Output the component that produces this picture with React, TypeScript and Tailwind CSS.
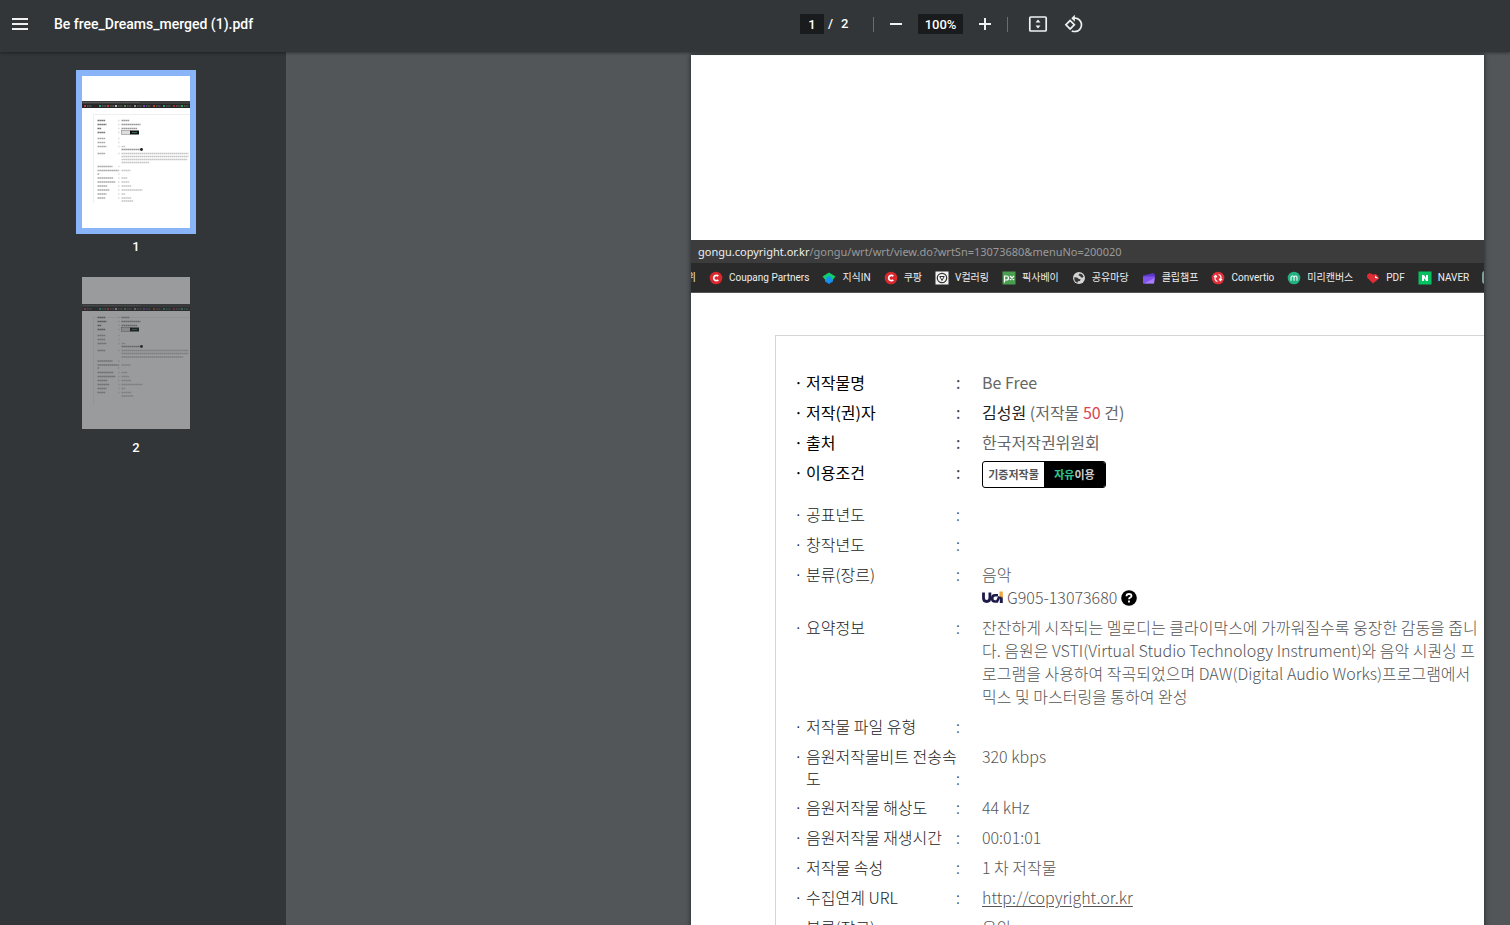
import React, { useState } from 'react';

type ThumbRow = { y: number; label?: number; value?: number; strong?: boolean };

const firstPageRows: ThumbRow[] = [
  { y: 44.5, label: 8, value: 8, strong: true },
  { y: 48.5, label: 9, value: 19, strong: true },
  { y: 52.5, label: 4, value: 16, strong: true },
  { y: 56.5, label: 8, strong: true },
  { y: 62.5, label: 8 },
  { y: 66.5, label: 8 },
  { y: 70.5, label: 9, value: 4 },
  { y: 73.5, value: 20, strong: true },
  { y: 77.5, label: 8, value: 67 },
  { y: 80.5, value: 67 },
  { y: 83.5, value: 66 },
  { y: 86.5, value: 28 },
  { y: 90.5, label: 15 },
  { y: 94.5, label: 21, value: 9 },
  { y: 98, label: 2 },
  { y: 102, label: 16, value: 6 },
  { y: 106, label: 18, value: 8 },
  { y: 110, label: 10, value: 10 },
  { y: 114, label: 12, value: 21 },
  { y: 118, label: 9, value: 4 },
  { y: 122, label: 8, value: 10 },
  { y: 125, value: 12 },
];

const secondPageRows: ThumbRow[] = [
  { y: 40.5, label: 8, value: 8, strong: true },
  { y: 44.5, label: 9, value: 19, strong: true },
  { y: 48.5, label: 4, value: 16, strong: true },
  { y: 52.5, label: 8, strong: true },
  { y: 58.5, label: 8 },
  { y: 62.5, label: 8 },
  { y: 66.5, label: 9, value: 4 },
  { y: 69.5, value: 20, strong: true },
  { y: 73.5, label: 8, value: 67 },
  { y: 76.5, value: 67 },
  { y: 80, value: 62 },
  { y: 84, label: 15 },
  { y: 88, label: 21, value: 9 },
  { y: 91, label: 2 },
  { y: 95.5, label: 16, value: 6 },
  { y: 99.5, label: 18, value: 8 },
  { y: 103.5, label: 10, value: 10 },
  { y: 107.5, label: 12, value: 21 },
  { y: 111.5, label: 9, value: 4 },
  { y: 115.5, label: 8, value: 10 },
  { y: 119, value: 12 },
];

const stripDots = [
  ['#e0453a', 3], ['#1fb8a0', 18], ['#e0453a', 26], ['#dddddd', 34], ['#5aa552', 43],
  ['#aaaaaa', 53], ['#7b4fe0', 62], ['#e0453a', 72], ['#2bb783', 82], ['#c03040', 92], ['#19c463', 100],
] as const;

const PageThumb = ({ rows, stripY, badgeY }: { rows: ThumbRow[]; stripY: number; badgeY: number }) => (
  <svg viewBox="0 0 108 152" className="block h-[152px] w-[108px]" aria-hidden="true">
    <rect width="108" height="152" fill="#fff" />
    <rect y={stripY} width="108" height="3" fill="#3c3c3c" />
    <rect y={stripY + 3} width="108" height="4" fill="#262626" />
    <path d={`M1 ${stripY + 1.5}H58`} stroke="#666" strokeWidth="0.8" strokeDasharray="1.6 0.5" />
    {stripDots.map(([color, x]) => (
      <g key={x}>
        <rect x={x - 1} y={stripY + 4} width="2" height="2" fill={color} opacity="0.8" />
        <path d={`M${x + 2} ${stripY + 5}h4.5`} stroke="#777" strokeWidth="1" strokeDasharray="1.2 0.4" />
      </g>
    ))}
    <path d={`M108 ${stripY + 13.5}H11.5V127`} fill="none" stroke="#e4e4e4" strokeWidth="0.6" />
    {rows.map((row) => (
      <g key={row.y} strokeWidth="1.6" strokeDasharray="1.7 0.3">
        {row.label && <path d={`M15.5 ${row.y}h${row.label}`} stroke={row.strong ? '#777' : '#aaa'} />}
        {row.label && <path d={`M36.5 ${row.y}h0.8`} stroke="#bbb" />}
        {row.value && <path d={`M39.5 ${row.y}h${row.value}`} stroke={row.strong ? '#999' : '#c6c6c6'} />}
      </g>
    ))}
    <rect x="39.5" y={badgeY - 1.8} width="9" height="3.6" fill="#ddd" stroke="#555" strokeWidth="0.4" />
    <rect x="48" y={badgeY - 2} width="9" height="4" fill="#111" />
    <path d={`M50 ${badgeY}h5`} stroke="#2f6f57" strokeWidth="1" />
    <circle cx="59.5" cy={badgeY + 17} r="1.4" fill="#222" />
  </svg>
);

const CoupangIcon = () => (
  <svg viewBox="0 0 14 14" className="size-[14px]" aria-hidden="true">
    <circle cx="7" cy="7" r="6.3" fill="#d9292f" />
    <path d="M9.3 5.1A2.7 2.7 0 1 0 9.3 8.9" fill="none" stroke="#fff" strokeWidth="1.7" />
  </svg>
);

const JisikIcon = () => (
  <svg viewBox="0 0 14 14" className="size-[14px]" aria-hidden="true">
    <path d="M3 6h8v4.5L7 13l-4-2.5z" fill="#1989e8" />
    <path d="M7 1.5L13.5 5.5 11 8.500H3L.5 5.5z" fill="#0fcf6c" />
    <circle cx="7" cy="8" r="2.8" fill="#1794ee" />
  </svg>
);

const VIcon = () => (
  <svg viewBox="0 0 14 14" className="size-[14px]" aria-hidden="true">
    <rect x="0.5" y="0.5" width="13" height="13" fill="#f2f2f2" />
    <circle cx="7" cy="7" r="4.7" fill="none" stroke="#333" strokeWidth="1.2" />
    <path d="M4.8 5.5h4.4L7 9.5z" fill="none" stroke="#333" />
  </svg>
);

const PixabayIcon = () => (
  <svg viewBox="0 0 14 14" className="size-[14px]" aria-hidden="true">
    <rect x="0.5" y="0.5" width="13" height="13" fill="#4a9e4f" />
    <path d="M2.5 11.5V5h2a1.9 1.9 0 0 1 0 4h-2M8 5l4 4M12 5L8 9" fill="none" stroke="#fff" strokeWidth="1.2" />
  </svg>
);

const GlobeIcon = () => (
  <svg viewBox="0 0 14 14" className="size-[14px]" aria-hidden="true">
    <circle cx="7" cy="7" r="6" fill="#d4d4d4" />
    <path d="M2.2 6.2l3 .3 1.6 1.6 1.8.2-.6 1.6-2 .4-.6 1.5c-2-.7-3.4-2.6-3.2-5.6zM7.5 2.4l2.5.8 1.6 2.4-1.2 1.2-1.8-.6-.4-1.2-1.8-.4z" fill="#383838" />
  </svg>
);

const ClipchampIcon = () => (
  <svg viewBox="0 0 14 14" className="size-[14px]" aria-hidden="true">
    <path d="M1 4.5L11.5 2l1.5 2v2H1z" fill="#5b36c9" />
    <path d="M1 5.5h12l-1 7H1z" fill="#8354ec" />
    <path d="M2 12.5L12.5 7 12 12.5z" fill="#a77cff" />
  </svg>
);

const ConvertioIcon = () => (
  <svg viewBox="0 0 14 14" className="size-[14px]" aria-hidden="true">
    <circle cx="7" cy="7" r="6.3" fill="#e2303a" />
    <path d="M6.5 10.5C4 10 3.5 7.5 4.5 5.5M3 6l1.7-1.5L6 6.3M7.5 3.5C10 4 10.5 6.5 9.5 8.5M11 8l-1.700 1.500L8 7.700" fill="none" stroke="#fff" strokeWidth="1.2" />
  </svg>
);

const MiriIcon = () => (
  <svg viewBox="0 0 14 14" className="size-[14px]" aria-hidden="true">
    <circle cx="7" cy="7" r="6.3" fill="#23b183" />
    <path d="M4 9.8V6.5a1.5 1.5 0 0 1 3 0v3.3V6.5a1.5 1.5 0 0 1 3 0v3.3" fill="none" stroke="#fff" strokeWidth="1.1" />
  </svg>
);

const PdfHeartIcon = () => (
  <svg viewBox="0 0 14 14" className="size-[14px]" aria-hidden="true">
    <path d="M7 12.5L1.5 7C-.3 4 3 1 6 3l1 .8C9 2 12 3.500 13 7.500z" fill="#e02c34" />
    <path d="M9 4.500l3.500 3-3.500-.6z" fill="#fff" />
  </svg>
);

const NaverIcon = () => (
  <svg viewBox="0 0 14 14" className="size-[14px]" aria-hidden="true">
    <rect x="0.5" y="0.5" width="13" height="13" fill="#05c160" />
    <path d="M4 10V4h2l2 3V4h2v6H8L6 7v3z" fill="#fff" />
  </svg>
);

const bookmarks = [
  { name: 'Coupang Partners', icon: <CoupangIcon /> },
  { name: '지식IN', icon: <JisikIcon /> },
  { name: '쿠팡', icon: <CoupangIcon /> },
  { name: 'V컬러링', icon: <VIcon /> },
  { name: '픽사베이', icon: <PixabayIcon /> },
  { name: '공유마당', icon: <GlobeIcon /> },
  { name: '클립챔프', icon: <ClipchampIcon /> },
  { name: 'Convertio', icon: <ConvertioIcon /> },
  { name: '미리캔버스', icon: <MiriIcon /> },
  { name: 'PDF', icon: <PdfHeartIcon /> },
  { name: 'NAVER', icon: <NaverIcon /> },
];

const UciLogo = () => (
  <svg viewBox="0 0 21 13" className="h-[13px] w-[21px] shrink-0" role="img" aria-label="UCI">
    <path d="M1.5 1.5v5.5q0 3.500 3.200 3.500t3.200-3.500V1.500" fill="none" stroke="#1d1b4a" strokeWidth="2.8" />
    <path d="M16 4.300h-3q-2.800 0-2.800 3.100t2.800 3.100h2l2.500-5" fill="none" stroke="#1d1b4a" strokeWidth="2.6" />
    <path d="M17.800 5h3v7h-3z" fill="#1d1b4a" />
    <path d="M17.500 0.500h3.300V7l-3.300-2z" fill="#f0a63c" />
  </svg>
);

const HelpBadge = () => (
  <svg viewBox="0 0 16 16" className="size-4 shrink-0" aria-hidden="true">
    <circle cx="8" cy="8" r="7.8" fill="#000" />
    <path d="M5.5 6.3q0-2.300 2.500-2.300t2.500 2c0 1.700-2.500 1.500-2.500 3.200M8 10.500v2" fill="none" stroke="#fff" strokeWidth="1.8" />
  </svg>
);

type Detail = { label: React.ReactNode; value?: React.ReactNode; strong?: boolean };

const details: Detail[] = [
  { label: '저작물명', value: 'Be Free', strong: true },
  {
    label: '저작(권)자',
    value: (
      <>
        <span className="text-[#222222]">김성원</span> (저작물 <span className="text-[#d9464f]">50</span> 건)
      </>
    ),
    strong: true,
  },
  { label: '출처', value: '한국저작권위원회', strong: true },
  {
    label: '이용조건',
    value: (
      <span className="mb-2 flex h-[27px] w-[124px] overflow-hidden rounded-[3px] border border-black text-[11px] leading-[25px] font-bold">
        <span className="flex-1 text-center text-[#555555]">기증저작물</span>
        <span className="flex-1 bg-black text-center text-[#cccccc]">
          <span className="text-[#2fc48d]">자유</span>이용
        </span>
      </span>
    ),
    strong: true,
  },
  { label: '공표년도' },
  { label: '창작년도' },
  {
    label: '분류(장르)',
    value: (
      <>
        음악
        <span className="flex items-center gap-1">
          <UciLogo />
          G905-13073680
          <HelpBadge />
        </span>
      </>
    ),
  },
  {
    label: '요약정보',
    value:
      '잔잔하게 시작되는 멜로디는 클라이막스에 가까워질수록 웅장한 감동을 줍니다. 음원은 VSTI(Virtual Studio Technology Instrument)와 음악 시퀀싱 프로그램을 사용하여 작곡되었으며 DAW(Digital Audio Works)프로그램에서 믹스 및 마스터링을 통하여 완성',
  },
  { label: '저작물 파일 유형' },
  { label: <>음원저작물비트 전송속<br />도</>, value: '320 kbps' },
  { label: '음원저작물 해상도', value: '44 kHz' },
  { label: '음원저작물 재생시간', value: '00:01:01' },
  { label: '저작물 속성', value: '1 차 저작물' },
  {
    label: '수집연계 URL',
    value: <a href="http://copyright.or.kr" className="underline underline-offset-2">http://copyright.or.kr</a>,
  },
  { label: '분류(장르)', value: '음악' },
];

const ToolbarButton = ({ label, children }: { label: string; children: React.ReactNode }) => (
  <button type="button" aria-label={label} className="flex size-6 items-center justify-center text-[#f1f1f1]">
    {children}
  </button>
);

const App: React.FC = () => {
  const [page, setPage] = useState('1');
  const [zoom, setZoom] = useState('100%');

  const thumbs = [
    { id: '1', rows: firstPageRows, stripY: 25, badgeY: 56.5 },
    { id: '2', rows: secondPageRows, stripY: 27, badgeY: 52.5 },
  ];

  return (
    <div className="flex h-screen flex-col overflow-hidden bg-[#525659] font-['Roboto',sans-serif]">
      {/* Toolbar */}
      <header className="z-10 flex h-[52px] shrink-0 items-center bg-[#323639] pb-1 text-[13px] font-medium text-white shadow-[0_1px_3px_rgba(0,0,0,0.4)]">
        <div className="flex w-[800px] items-center gap-[22px] pl-2">
          <ToolbarButton label="Menu">
            <svg viewBox="0 0 24 24" className="size-6" fill="currentColor" aria-hidden="true">
              <path d="M4 6h16v2H4zM4 11h16v2H4zM4 16h16v2H4z" />
            </svg>
          </ToolbarButton>
          <h1 className="text-sm">Be free_Dreams_merged (1).pdf</h1>
        </div>
        <div className="flex items-center">
          <input
            aria-label="Page number"
            value={page}
            onChange={(e) => setPage(e.target.value)}
            className="h-5 w-6 bg-[#191b1c] text-center outline-none"
          />
          <span className="ml-1 w-2">/</span>
          <span className="ml-[5px] w-8">2</span>
          <span className="h-[15px] w-px bg-[#6b6e70]" />
          <div className="ml-[10px] flex items-center gap-[10px]">
            <ToolbarButton label="Zoom out">
              <svg viewBox="0 0 24 24" className="size-6" fill="currentColor" aria-hidden="true">
                <path d="M6 11h12v2H6z" />
              </svg>
            </ToolbarButton>
            <input
              aria-label="Zoom level"
              value={zoom}
              onChange={(e) => setZoom(e.target.value)}
              className="h-5 w-[45px] bg-[#191b1c] text-center outline-none"
            />
            <ToolbarButton label="Zoom in">
              <svg viewBox="0 0 24 24" className="size-6" fill="currentColor" aria-hidden="true">
                <path d="M6 11h5V6h2v5h5v2h-5v5h-2v-5H6z" />
              </svg>
            </ToolbarButton>
          </div>
          <span className="ml-[10px] h-[15px] w-px bg-[#6b6e70]" />
          <div className="ml-[18px] flex items-center gap-3">
            <ToolbarButton label="Fit to page">
              <svg viewBox="0 0 24 24" className="size-6" aria-hidden="true">
                <rect x="3.8" y="5" width="16.4" height="14" rx="1" fill="none" stroke="currentColor" strokeWidth="1.7" />
                <path d="M12 7.5l2.5 3h-5zM12 16.5l2.5-3h-5z" fill="currentColor" />
              </svg>
            </ToolbarButton>
            <ToolbarButton label="Rotate counterclockwise">
              <svg viewBox="0 0 24 24" className="size-5" fill="currentColor" aria-hidden="true">
                <path d="M7.34 6.41L.86 12.9l6.49 6.48 6.49-6.48-6.5-6.49zM3.69 12.9l3.66-3.66L11 12.9l-3.66 3.66-3.65-3.66zm15.67-6.26C17.61 4.88 15.3 4 13 4V.76L8.76 5 13 9.24V6c1.79 0 3.58.68 4.95 2.05 2.73 2.73 2.73 7.17 0 9.9C16.58 19.32 14.79 20 13 20c-.97 0-1.94-.21-2.84-.61l-1.49 1.49C10.02 21.62 11.51 22 13 22c2.3 0 4.61-.88 6.36-2.64 3.52-3.51 3.52-9.21 0-12.72z" />
              </svg>
            </ToolbarButton>
          </div>
        </div>
      </header>

      <div className="flex min-h-0 flex-1">
        {/* Thumbnails */}
        <nav aria-label="Pages" className="flex w-[286px] shrink-0 flex-col items-center gap-4 bg-[#323639] pt-[18px] pr-[14px]">
          {thumbs.map((thumb) => (
            <button
              key={thumb.id}
              type="button"
              onClick={() => setPage(thumb.id)}
              className="flex flex-col items-center gap-[5px] text-[13px] leading-4 font-medium text-white"
            >
              <span className={page === thumb.id ? 'border-6 border-[#8ab4f8]' : 'border-6 border-transparent'}>
                <span className={page === thumb.id ? 'block' : 'block opacity-50'}>
                  <PageThumb rows={thumb.rows} stripY={thumb.stripY} badgeY={thumb.badgeY} />
                </span>
              </span>
              {thumb.id}
            </button>
          ))}
        </nav>

        {/* Document */}
        <main className="flex min-w-0 flex-1 justify-end overflow-hidden pt-[3px] pr-[26px]">
          <article className="h-[1123px] w-[793px] shrink-0 overflow-hidden bg-white pt-[185px] font-['Noto_Sans_CJK_KR',sans-serif] shadow-[0_0_5px_rgba(0,0,0,0.6)]">
            <div className="h-[23px] bg-[#3c3c3c] pl-[7px] font-['Noto_Sans',sans-serif] text-[11px] leading-[23px] text-[#9a9a9a]">
              <span className="text-[#eeeeee]">gongu.copyright.or.kr</span>/gongu/wrt/wrt/view.do?wrtSn=13073680&amp;menuNo=200020
            </div>
            <div className="flex h-[30px] items-center gap-[13px] overflow-hidden border-b border-[#555555] bg-[#2a2a2a] font-['Roboto','Noto_Sans_CJK_KR',sans-serif] text-[10px] whitespace-nowrap text-[#eeeeee]">
              <span className="flex w-[5px] shrink-0 justify-end overflow-hidden">위</span>
              {bookmarks.map((item) => (
                <a key={item.name} href="#" className="flex shrink-0 items-center gap-[6px]">
                  {item.icon}
                  {item.name}
                </a>
              ))}
              <span className="size-[13px] shrink-0 rounded-[3px] bg-[#7fa099]" />
            </div>

            <dl className="mt-[42px] ml-[84px] flex flex-col gap-[7px] border-t border-l border-[#d5d5d5] pt-[35px] pb-10 pl-[18px] text-base">
              {details.map((row, idx) => (
                <div key={idx} className={row.strong ? 'flex min-h-[23px] text-[#666666]' : 'flex min-h-[23px] font-light text-[#555555]'}>
                  <dt className={row.strong ? 'flex w-[188px] items-end self-start leading-[22px] text-black' : 'flex w-[188px] items-end self-start leading-[22px] text-[#222222]'}>
                    <span className="w-3 self-start">·</span>
                    <span className="w-[150px] whitespace-nowrap">{row.label}</span>
                    <span className="text-[#444444]">:</span>
                  </dt>
                  <dd className="w-[496px] leading-[23px] break-all">{row.value}</dd>
                </div>
              ))}
            </dl>
          </article>
        </main>
      </div>
    </div>
  );
};

export default App;
